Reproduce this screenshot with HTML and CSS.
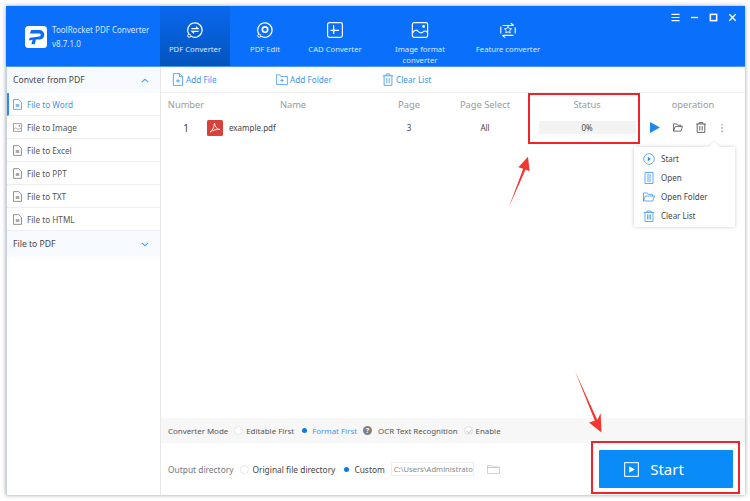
FILE: index.html
```html
<!DOCTYPE html>
<html lang="en">
<head>
<meta charset="utf-8">
<title>ToolRocket PDF Converter</title>
<link rel="stylesheet" href="styles.css">
</head>
<body>
<svg class="defs" width="0" height="0" aria-hidden="true">
  <symbol id="doc" viewBox="0 0 10 12"><path d="M.6.600h5.800l3 2.900v7.900H.6z" fill="none" stroke="currentColor" stroke-width=".9"/><rect x="3" y="5.500" width="4" height="3.200" fill="currentColor" opacity=".65"/></symbol>
  <symbol id="pic" viewBox="0 0 12 11"><rect x=".5" y=".5" width="11" height="10" fill="none" stroke="currentColor" stroke-width=".9"/><circle cx="8.500" cy="3.200" r="1" fill="currentColor"/><path d="M1 8c1.500-2 2.500-2.500 4-1.200S8 8 11 6.500" fill="none" stroke="currentColor" stroke-width=".8"/></symbol>
</svg>
<div class="window">
  <header class="top">
    <div class="brand">
      <svg class="logo" viewBox="0 0 22 22"><rect width="22" height="22" rx="3.500" fill="#fff"/><path d="M6 4h8.500a4.600 4.600 0 0 1 0 9.600H11l-1.300 4.600H6.400l1.200-4.400-3.800.6 1-2.600 9.700-1.400a1.500 1.500 0 0 0 .2-2.900H5z" fill="#0a6ef5"/></svg>
      <div class="brand-text"><div>ToolRocket PDF Converter</div><div>v8.7.1.0</div></div>
    </div>
    <nav class="tabs">
      <div class="tab active t70">
        <svg viewBox="0 0 20 20"><path d="M3.200 14.500A8 8 0 1 1 5.500 16.800" fill="none" stroke="#fff" stroke-width="1.300"/><circle cx="3.600" cy="16.400" r="1.700" fill="none" stroke="#fff" stroke-width="1.100"/><path d="M6 8.500h7.500L11 6.400M14 11.500H6.500L9 13.600" fill="none" stroke="#fff" stroke-width="1.200"/></svg>
        <span>PDF Converter</span>
      </div>
      <div class="tab t70">
        <svg viewBox="0 0 20 20"><path d="M3.200 14.500A8 8 0 1 1 5.500 16.800" fill="none" stroke="#fff" stroke-width="1.300"/><circle cx="3.600" cy="16.400" r="1.700" fill="none" stroke="#fff" stroke-width="1.100"/><circle cx="10" cy="9.500" r="3" fill="none" stroke="#fff" stroke-width="1.800"/></svg>
        <span>PDF Edit</span>
      </div>
      <div class="tab t70">
        <svg viewBox="0 0 20 20"><rect x="1.800" y="1.800" width="16.400" height="16.400" rx="2" fill="none" stroke="#fff" stroke-width="1.300"/><path d="M8.500 4.500v10M5 10.500h9.500" fill="none" stroke="#fff" stroke-width="1.300"/><circle cx="8.500" cy="10.500" r="1.400" fill="#fff"/></svg>
        <span>CAD Converter</span>
      </div>
      <div class="tab t100">
        <svg viewBox="0 0 20 20"><rect x="1.500" y="1.800" width="17" height="16.400" rx="2" fill="none" stroke="#fff" stroke-width="1.300"/><circle cx="14" cy="6" r="1.500" fill="#fff"/><path d="M2 13c2-3.500 4-3.500 6-1.500s4 2 5.500 .5 3-1 4.500 .5" fill="none" stroke="#fff" stroke-width="1.200"/></svg>
        <span class="wrap">Image format converter</span>
      </div>
      <div class="tab t76">
        <svg viewBox="0 0 20 20"><path d="M4 5H15.500M13 2.500L16.500 5 M16 16H4.500M7 18.500L3.500 16M2 6v8M18 7v7" fill="none" stroke="#fff" stroke-width="1.200"/><path d="M10 5.800l1.200 2.600 2.800.3-2.100 1.900.6 2.800-2.500-1.400-2.500 1.400.6-2.800-2.100-1.900 2.800-.3z" fill="none" stroke="#fff" stroke-width="1"/></svg>
        <span>Feature converter</span>
      </div>
    </nav>
    <div class="winctl">
      <svg viewBox="0 0 10 10"><path d="M.5 1.500h9M.5 5h9M.5 8.500h9" stroke="#fff" stroke-width="1.300"/></svg>
      <svg viewBox="0 0 10 10"><path d="M1 5h8" stroke="#fff" stroke-width="1.500"/></svg>
      <svg viewBox="0 0 10 10"><rect x="1.500" y="1.500" width="7" height="7" fill="none" stroke="#fff" stroke-width="1.700"/></svg>
      <svg viewBox="0 0 10 10"><path d="M1.500 1.500l7 7M8.500 1.500l-7 7" stroke="#fff" stroke-width="1.500"/></svg>
    </div>
  </header>
  <div class="body">
    <aside class="side">
      <div class="group">Convter from PDF<svg viewBox="0 0 10 6"><path d="M1 5l4-3.500L9 5" fill="none" stroke="#4a9df5" stroke-width="1.300"/></svg></div>
      <div class="item on"><svg><use href="#doc"/></svg>File to Word</div>
      <div class="item"><svg><use href="#pic"/></svg>File to Image</div>
      <div class="item"><svg><use href="#doc"/></svg>File to Excel</div>
      <div class="item"><svg><use href="#doc"/></svg>File to PPT</div>
      <div class="item"><svg><use href="#doc"/></svg>File to TXT</div>
      <div class="item"><svg><use href="#doc"/></svg>File to HTML</div>
      <div class="group">File to PDF<svg viewBox="0 0 10 6"><path d="M1 1l4 3.500L9 1" fill="none" stroke="#4a9df5" stroke-width="1.300"/></svg></div>
    </aside>
    <main class="main">
      <div class="toolbar">
        <div class="tool w-file"><svg viewBox="0 0 12 14"><path d="M1 .7h6.500L11 4v9.300H1zM7.500.7V4H11M3.800 8.500h4.400M6 6.300v4.400" fill="none" stroke="#3c95f2" stroke-width=".9"/></svg>Add File</div>
        <div class="tool w-folder"><svg viewBox="0 0 14 13"><path d="M.7 1h4l1 2h7.600v9.300H.7zM4.800 7.500h4.400M7 5.300v4.400" fill="none" stroke="#3c95f2" stroke-width=".9"/></svg>Add Folder</div>
        <div class="tool"><svg viewBox="0 0 12 14"><path d="M.5 3h11M4 3V1h4v2M1.800 3v10.300h8.400V3M4.700 5.500v5.500M7.300 5.500v5.500" fill="none" stroke="#3c95f2" stroke-width=".9"/></svg>Clear List</div>
      </div>
      <div class="row head">
        <div class="c-num">Number</div><div class="c-name">Name</div><div class="c-page">Page</div><div class="c-sel">Page Select</div><div class="c-status">Status</div><div class="c-op">operation</div>
      </div>
      <div class="row file">
        <div class="c-num big">1</div>
        <div class="c-name left"><svg class="pdf" viewBox="0 0 16 16"><rect width="16" height="16" rx="1.500" fill="#d9413d"/><path d="M3 12c2-1 4-4 4.500-9 .5 4 2 6 5.500 6.500-3-.5-7 .5-10 2.500z" fill="none" stroke="#fff" stroke-width=".9"/></svg>example.pdf</div>
        <div class="c-page">3</div>
        <div class="c-sel">All</div>
        <div class="c-status"><div class="bar">0%</div></div>
        <div class="c-op ops">
          <svg viewBox="0 0 10 11"><path d="M0 0l10 5.500L0 11z" fill="#1e88ee"/></svg>
          <svg viewBox="0 0 11 10"><path d="M.6 9V1h3.500l1 1.500h3.700V4M.6 9L2.400 4h8L8.800 9z" fill="none" stroke="#555" stroke-width=".9"/></svg>
          <svg viewBox="0 0 10 11"><path d="M.2 2h9.600M3.200 2V.6h3.600V2M1.200 2v8.400h7.600V2M3.800 4v4.500M6.200 4v4.500" fill="none" stroke="#555" stroke-width=".9"/></svg>
          <svg class="dots" viewBox="0 0 2 10"><circle cx="1" cy="1" r=".8" fill="#555"/><circle cx="1" cy="5" r=".8" fill="#555"/><circle cx="1" cy="9" r=".8" fill="#555"/></svg>
        </div>
      </div>
      <div class="spacer"></div>
      <div class="mode">
        <span>Converter Mode</span>
        <i class="radio"></i><span>Editable First</span>
        <i class="radio sel"></i><span class="blue">Format First</span>
        <b class="help">?</b><span>OCR Text Recognition</span>
        <i class="radio chk"></i><span>Enable</span>
      </div>
      <div class="output">
        <span class="gray">Output directory</span>
        <i class="radio"></i><span>Original file directory</span>
        <i class="radio sel"></i><span>Custom</span>
        <div class="path">C:\Users\Administrato</div>
        <svg class="browse" viewBox="0 0 13 9"><path d="M.5.500h4l1 1.500h7v6.500H.5zM.5 2.500h12" fill="none" stroke="#bbb" stroke-width=".7"/></svg>
        <button class="start"><svg viewBox="0 0 16 16"><rect x=".7" y=".7" width="14.600" height="14.600" fill="none" stroke="#fff" stroke-width="1.100"/><path d="M5.500 4.500l6 3.500-6 3.500z" fill="#fff"/></svg>Start</button>
      </div>
    </main>
  </div>
</div>
<div class="menu">
  <div class="mi"><svg viewBox="0 0 12 12"><circle cx="6" cy="6" r="5.300" fill="none" stroke="#3c95f2" stroke-width=".8"/><path d="M4.800 3.800l3 2.200-3 2.200z" fill="#1e88ee"/></svg>Start</div>
  <div class="mi"><svg viewBox="0 0 12 12"><path d="M2 .5h8v11H2zM3.800 3h4.400M3.800 5h4.400M3.800 7h4.400M3.800 9h4.400" fill="none" stroke="#3c95f2" stroke-width=".8"/></svg>Open</div>
  <div class="mi"><svg viewBox="0 0 12 12"><path d="M.5 10V2h3.800l1 1.300h4.200V5M.5 10l1.800-5h9.200L9.700 10z" fill="none" stroke="#3c95f2" stroke-width=".8"/></svg>Open Folder</div>
  <div class="mi"><svg viewBox="0 0 12 12"><path d="M.8 2.500h10.400M4 2.500V1h4v1.500M2 2.500v9h8v-9M4.500 4.500v5M6 4.500v5M7.500 4.500v5" fill="none" stroke="#3c95f2" stroke-width=".8"/></svg>Clear List</div>
</div>
<div class="redbox rb1"></div>
<div class="redbox rb2"></div>
<svg class="arrow a1" viewBox="0 0 30 65"><path d="M1 64L19 16 13 14 25 1 27 19 22 17z" fill="#f43530"/></svg>
<svg class="arrow a2" viewBox="0 0 36 75"><path d="M1 0L28 59 32 51 33 74 18 62 25 60z" fill="#f43530"/></svg>
</body>
</html>
```
FILE: styles.css
```css
* { box-sizing: border-box; }
html, body { margin: 0; padding: 0; }
body {
  width: 750px; height: 501px; overflow: hidden; position: relative;
  background: #fff;
  font-family: "Noto Sans", "Open Sans", "Liberation Sans", sans-serif;
  font-size: 8.200px; color: #555;
  padding: 6px 5px 6px 6px;
}
.defs { position: absolute; }
.window {
  width: 739px; height: 489px; display: flex; flex-direction: column;
  background: #fff; box-shadow: 0 0 4px rgba(60, 70, 100, .55);
}
.top { height: 61px; flex: none; display: flex; background: #0a6ffa; color: #fff; border-bottom: 1px solid #4c97fa; }
.brand { width: 154px; display: flex; align-items: center; padding: 2px 0 0 19px; gap: 5px; }
.logo { width: 22px; height: 22px; flex: none; }
.brand-text { font-size: 8px; line-height: 14px; white-space: nowrap; color: #d8e8ff; }
.tabs { display: flex; }
.tab { display: flex; flex-direction: column; align-items: center; padding-top: 15px; color: #dbe9ff; font-size: 7.700px; line-height: 11px; text-align: center; }
.tab svg { width: 18px; height: 18px; margin-bottom: 5px; flex: none; }
.tab.active { background: linear-gradient(#0a68ee, #0355bd); }
.t70 { width: 70px; } .t100 { width: 100px; } .t76 { width: 76px; }
.wrap { width: 64px; }
.winctl { margin-left: auto; display: flex; gap: 10px; padding: 7px 8px 0 0; }
.winctl svg { width: 9px; height: 9px; }
.body { flex: 1; display: flex; min-height: 0; }
.side { width: 155px; flex: none; border-right: 1px solid #e8e8e8; border-left: 1px solid #c8d0dc; }
.group { height: 26px; display: flex; align-items: center; justify-content: space-between; padding: 0 11px 0 6px; background: #f7fbff; color: #444; font-size: 8.600px; }
.group svg { width: 8px; height: 5px; }
.item { height: 23px; display: flex; align-items: center; gap: 5px; padding-left: 6px; border-bottom: 1px solid #eee; }
.item svg { width: 9px; height: 11px; color: #777; flex: none; }
.item.on { color: #3c95f2; border-left: 2px solid #2a8cf0; padding-left: 4px; }
.item.on svg { color: #3c95f2; }
.main { flex: 1; display: flex; flex-direction: column; min-width: 0; }
.toolbar { height: 26px; flex: none; display: flex; align-items: center; padding-left: 11px; border-bottom: 1px solid #eee; color: #3c95f2; }
.tool { display: flex; align-items: center; gap: 2px; }
.tool svg { width: 12px; height: 13px; flex: none; }
.w-file { width: 104px; } .w-folder { width: 106px; }
.row { display: flex; text-align: center; align-items: center; flex: none; }
.head { height: 23px; color: #999; font-size: 9.300px; }
.file { height: 23px; color: #444; font-size: 8px; }
.c-num { width: 46px; padding-left: 4px; flex: none; }
.c-name { width: 172px; flex: none; }
.c-page { width: 60px; flex: none; }
.c-sel { width: 92px; flex: none; }
.c-status { width: 112px; flex: none; }
.c-op { width: 100px; flex: none; }
.left { display: flex; align-items: center; gap: 6px; text-align: left; }
.pdf { width: 16px; height: 16px; }
.big { font-size: 10px; }
.bar { width: 97px; height: 13px; margin: 0 auto; background: #f3f3f3; line-height: 13px; }
.ops { display: flex; align-items: center; gap: 13px; padding-left: 7px; }
.ops svg { width: 10px; height: 11px; flex: none; }
.ops .dots { width: 2px; height: 8px; margin-left: 2px; }
.spacer { flex: 1; }
.mode { height: 25px; flex: none; display: flex; align-items: center; padding-left: 7px; background: #f7f7f7; font-size: 7.900px; white-space: nowrap; }
.radio { width: 9px; height: 9px; border-radius: 50%; border: 1px solid #e6e6e6; background: #fff; flex: none; margin: 0 3px 0 6px; display: block; position: relative; }
.radio.sel { border: 2px solid #fff; background: #0a78e8; }
.radio.chk { border-color: #ddd; }
.radio.chk::after { content: ""; position: absolute; left: 2px; top: 1px; width: 3px; height: 4px; border: solid #ccc; border-width: 0 1px 1px 0; transform: rotate(40deg); }
.blue { color: #3c95f2; }
.help { width: 9px; height: 9px; border-radius: 50%; background: #808080; color: #fff; font-size: 7px; line-height: 9px; text-align: center; margin: 0 6px; flex: none; }
.output { height: 52px; flex: none; display: flex; align-items: center; padding-left: 7px; white-space: nowrap; font-size: 8.400px; color: #444; }
.output .radio { margin: 0 3px 0 7px; }
.gray { color: #777; }
.path { width: 83px; height: 14px; margin-left: 6px; border: 1px solid #eee; color: #888; font-size: 7.600px; line-height: 12px; padding-left: 2px; overflow: hidden; }
.browse { width: 13px; height: 9px; margin-left: 13px; flex: none; }
.start { margin-left: auto; margin-right: 12px; width: 134px; height: 38px; background: #0a8cf8; border: 0; border-radius: 1px; color: #fff; font: 15px "Noto Sans", sans-serif; display: flex; align-items: center; justify-content: center; gap: 11px; padding: 0 24px 0 0; }
.start svg { width: 15px; height: 15px; }
.menu { position: absolute; left: 634px; top: 147px; width: 101px; height: 80px; background: #fff; box-shadow: 0 0 4px rgba(0, 0, 0, .2); padding: 2px 0 0 9px; }
.menu::before { content: ""; position: absolute; left: 76px; top: -4px; width: 8px; height: 8px; background: #fff; transform: rotate(45deg); box-shadow: -1px -1px 1px rgba(0, 0, 0, .06); }
.mi { height: 19px; display: flex; align-items: center; gap: 6px; position: relative; color: #444; font-size: 8px; }
.mi svg { width: 12px; height: 12px; flex: none; }
.redbox { position: absolute; border: 2px solid #ee2428; }
.rb1 { left: 528px; top: 93px; width: 112px; height: 51px; }
.rb2 { left: 591px; top: 441px; width: 149px; height: 53px; }
.arrow { position: absolute; }
.a1 { left: 508px; top: 155px; width: 24px; height: 54px; }
.a2 { left: 574px; top: 366px; width: 30px; height: 72px; }
```
